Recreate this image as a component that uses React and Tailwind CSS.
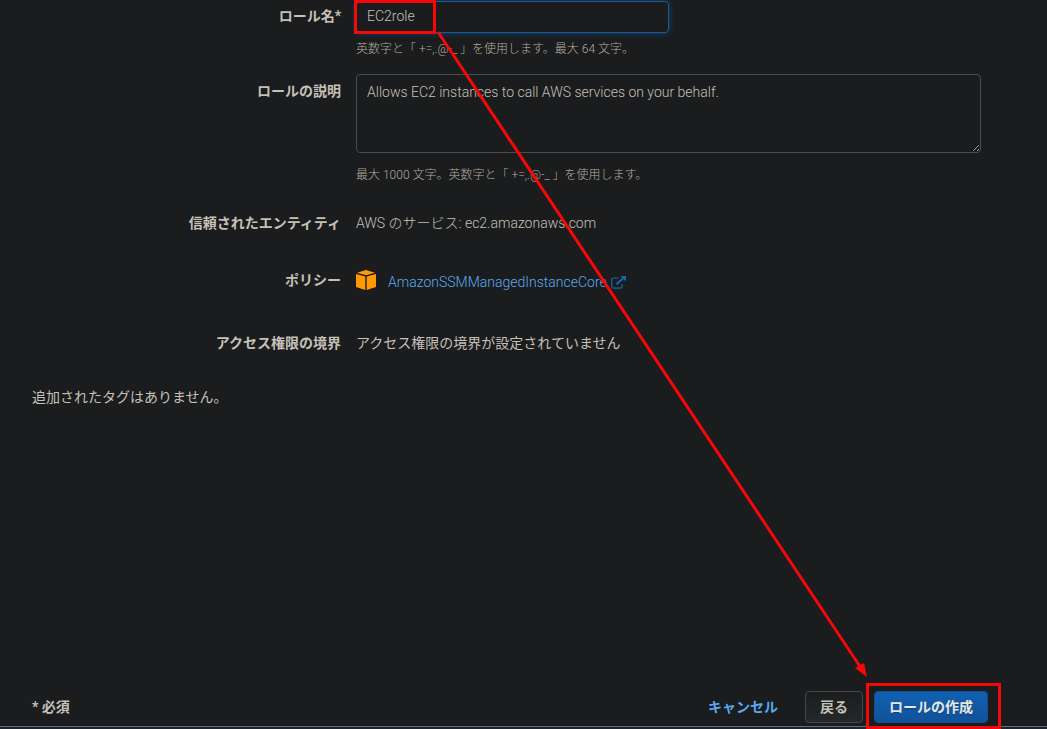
import { useState } from "react";

const labelClass = "text-right font-bold";
const helpClass = "text-xs leading-5 font-light text-[#b3aca0]";

function PolicyIcon() {
  return (
    <svg width="20" height="20" viewBox="0 0 20 20" fill="#ff9a00" aria-hidden="true">
      <path d="M10 0 19 2.8 10 5.2 1 2.8Z" />
      <path d="M0 4 9.3 6.6V20L0 16.9Z" />
      <path d="M20 4 10.7 6.6V20L20 16.9Z" />
    </svg>
  );
}

function ExternalIcon() {
  return (
    <svg width="15" height="13" viewBox="0 0 15 13" fill="none" stroke="#1467b3" aria-hidden="true">
      <path d="M8 2H2.5A1.8 1.8 0 0 0 .7 3.8v6.6a1.8 1.8 0 0 0 1.8 1.8h6.7a1.8 1.8 0 0 0 1.8-1.8V8" strokeWidth="1.2" />
      <path d="M5.5 8.2 12.6 1.8" strokeWidth="2" />
      <path d="M9.3 0H15V5.6Z" fill="#1467b3" stroke="none" />
    </svg>
  );
}

function Highlight({ className }) {
  return <span className={`pointer-events-none absolute border-3 border-[#f50808] ${className}`} />;
}

function App() {
  const [roleName, setRoleName] = useState("EC2role");
  const [description, setDescription] = useState(
    "Allows EC2 instances to call AWS services on your behalf."
  );

  return (
    <div className="relative flex min-h-screen flex-col overflow-hidden bg-[#1a1c1d] font-['Roboto','Noto_Sans_CJK_JP',sans-serif] text-sm leading-5 text-[#c5c0b8]">
      <main className="flex-1 pt-px pr-[66px] pl-8">
        <div className="grid grid-cols-[309px_minmax(0,1fr)] gap-x-[15px]">
          <label htmlFor="role-name" className={`pt-[5px] ${labelClass}`}>
            ロール名*
          </label>
          <div>
            <div className="relative w-1/2">
              <input
                id="role-name"
                type="text"
                value={roleName}
                onChange={(event) => setRoleName(event.target.value)}
                className="block h-8 w-full rounded-sm border border-[#1f5791] px-2.5 pb-0.5 font-light shadow-[0_0_6px_#0e4a86] outline-none"
              />
              <Highlight className="-top-px -left-0.5 h-[34px] w-[82px]" />
            </div>
            <p className={`mt-1.5 ${helpClass}`}>英数字と「 +=,.@-_ 」を使用します。最大 64 文字。</p>
          </div>

          <label htmlFor="role-description" className={`mt-[15px] pt-[7px] ${labelClass}`}>
            ロールの説明
          </label>
          <div className="mt-[15px]">
            <textarea
              id="role-description"
              value={description}
              onChange={(event) => setDescription(event.target.value)}
              className="block h-[79px] w-full rounded-sm border border-[#494b4c] px-2.5 py-[7px] font-light outline-none [color-scheme:dark]"
            />
            <p className={`mt-3 ${helpClass}`}>最大 1000 文字。英数字と「 +=,.@-_ 」を使用します。</p>
          </div>
        </div>

        <dl className="mt-7 grid grid-cols-[309px_minmax(0,1fr)] gap-x-[15px]">
          <dt className={labelClass}>信頼されたエンティティ</dt>
          <dd className="font-light">AWS のサービス: ec2.amazonaws.com</dd>
          <dt className={`mt-[37px] ${labelClass}`}>ポリシー</dt>
          <dd className="mt-[37px] flex gap-3">
            <PolicyIcon />
            <a href="#policy" className="mt-0.5 flex items-center gap-1 font-light text-[#5aaaf2]">
              AmazonSSMManagedInstanceCore
              <ExternalIcon />
            </a>
          </dd>
          <dt className={`mt-[41px] ${labelClass}`}>アクセス権限の境界</dt>
          <dd className="mt-[41px]">アクセス権限の境界が設定されていません</dd>
        </dl>

        <p className="mt-[34px]">追加されたタグはありません。</p>
      </main>

      <footer className="border-t border-[#17191a]">
        <div className="flex items-center pt-[7px] pr-[59px] pb-[3px] pl-8 font-bold">
          <span className="flex-1">* 必須</span>
          <button type="button" className="mr-[27px] text-[#5ba9ec]">
            キャンセル
          </button>
          <button
            type="button"
            className="mr-[11px] h-8 rounded-sm border border-[#44484a] bg-linear-to-b from-[#1b1d1e] to-[#25282a] px-[14px]"
          >
            戻る
          </button>
          <div className="relative">
            <button
              type="button"
              className="block h-8 rounded-sm border border-[#134f8f] bg-linear-to-b from-[#1160b2] to-[#11529a] px-[14px] text-[#e8e6e3] text-shadow-sm"
            >
              ロールの作成
            </button>
            <Highlight className="-top-2 -right-[13px] -bottom-[6px] -left-2" />
          </div>
        </div>
        <div className="h-[3px] border-t border-[#686d73] bg-[#1c2430]" />
      </footer>

      <svg className="pointer-events-none absolute top-0 left-0" width="1047" height="729" viewBox="0 0 1047 729" aria-hidden="true">
        <path d="M438 32 861 668" stroke="#f50808" strokeWidth="3" />
        <path d="M867 677 855 668 864 663Z" fill="#f50808" />
      </svg>
    </div>
  );
}

export default App;
